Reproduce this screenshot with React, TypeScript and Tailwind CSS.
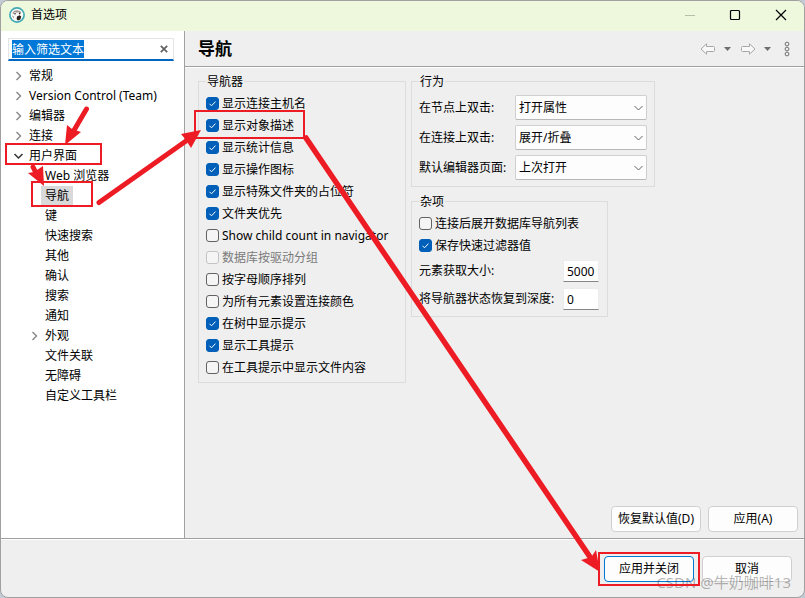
import { useEffect, useRef } from "react";

type TreeItem = {
    label: string;
    level: 1 | 2;
    arrow?: "closed" | "open";
    selected?: boolean;
};

const tree: TreeItem[] = [
    { label: "常规", level: 1, arrow: "closed" },
    { label: "Version Control (Team)", level: 1, arrow: "closed" },
    { label: "编辑器", level: 1, arrow: "closed" },
    { label: "连接", level: 1, arrow: "closed" },
    { label: "用户界面", level: 1, arrow: "open" },
    { label: "Web 浏览器", level: 2 },
    { label: "导航", level: 2, selected: true },
    { label: "键", level: 2 },
    { label: "快速搜索", level: 2 },
    { label: "其他", level: 2 },
    { label: "确认", level: 2 },
    { label: "搜索", level: 2 },
    { label: "通知", level: 2 },
    { label: "外观", level: 2, arrow: "closed" },
    { label: "文件关联", level: 2 },
    { label: "无障碍", level: 2 },
    { label: "自定义工具栏", level: 2 },
];

const navigatorOptions = [
    { label: "显示连接主机名", checked: true },
    { label: "显示对象描述", checked: true },
    { label: "显示统计信息", checked: true },
    { label: "显示操作图标", checked: true },
    { label: "显示特殊文件夹的占位符", checked: true },
    { label: "文件夹优先", checked: true },
    { label: "Show child count in navigator", checked: false },
    { label: "数据库按驱动分组", checked: false, disabled: true },
    { label: "按字母顺序排列", checked: false },
    { label: "为所有元素设置连接颜色", checked: false },
    { label: "在树中显示提示", checked: true },
    { label: "显示工具提示", checked: true },
    { label: "在工具提示中显示文件内容", checked: false },
];

const behaviors = [
    { id: "node", label: "在节点上双击:", value: "打开属性" },
    { id: "connection", label: "在连接上双击:", value: "展开/折叠" },
    { id: "editor", label: "默认编辑器页面:", value: "上次打开" },
];

const Logo = () => (
    <svg className="h-4 w-4" viewBox="0 0 16 16" aria-hidden="true">
        <circle cx="8" cy="8" r="7.1" fill="#fbf9f7" stroke="#3fa9b5" strokeWidth="1.7" />
        <path d="M3.400 6.600C4 4.400 5.600 3.200 7.800 3.200 10 3.200 11.800 4.200 12.400 6L11 6.400 9.600 5.200 7.400 5.800 5.600 5 4.600 7Z" fill="#a39b97" />
        <path d="M8 9.400 10.600 8.200 12.200 9.600 11.400 12.400 8.800 13.600 7.600 12Z" fill="#2b211f" />
        <path d="M3.200 8.600 4.600 9.600 4.800 11.600Z" fill="#655b58" />
        <circle cx="6" cy="6.800" r=".8" fill="#2b211f" />
        <circle cx="10.600" cy="6.600" r=".8" fill="#2b211f" />
    </svg>
);

const TitleBar = () => (
    <header className="flex h-[30px] items-center bg-[#eef8dc] pb-[2px] pl-2">
        <Logo />
        <span className="ml-[6px]">首选项</span>
        <div className="ml-auto flex h-full">
            <button aria-label="最小化" className="grid w-[45px] place-items-center text-[#b6bda9]">
                <svg className="h-3 w-3" viewBox="0 0 12 12"><path d="M1 6.500H11" stroke="currentColor" /></svg>
            </button>
            <button aria-label="最大化" className="grid w-[45px] place-items-center">
                <svg className="h-3 w-3" viewBox="0 0 12 12"><rect x="1.500" y="1.500" width="9" height="9" rx="1" fill="none" stroke="currentColor" strokeWidth="1.200" /></svg>
            </button>
            <button aria-label="关闭" className="grid w-[47px] place-items-center">
                <svg className="h-3 w-3" viewBox="0 0 12 12"><path d="M1 1 11 11M11 1 1 11" stroke="currentColor" strokeWidth="1.200" /></svg>
            </button>
        </div>
    </header>
);

const TreeRow = ({ item }: { item: TreeItem }) => (
    <li
        role="treeitem"
        aria-selected={!!item.selected}
        className={item.level === 1 ? "flex h-5 items-center pl-3" : "flex h-5 items-center pl-7"}
    >
        <span className="w-3 shrink-0">
            {item.arrow && (
                <svg className={item.arrow === "open" ? "h-3 w-3 text-[#333]" : "h-3 w-3 text-[#8c8c8c]"} viewBox="0 0 12 12">
                    <path
                        d={item.arrow === "open" ? "M1.500 4 5.500 8 9.500 4" : "M3.500 2 7.500 6 3.500 10"}
                        fill="none"
                        stroke="currentColor"
                        strokeWidth="1.500"
                    />
                </svg>
            )}
        </span>
        <span className={item.selected ? "bg-[#d9d9d9] px-1 leading-5" : "px-1 leading-5"}>{item.label}</span>
    </li>
);

const Sidebar = () => {
    const filter = useRef<HTMLInputElement>(null);

    useEffect(() => {
        filter.current?.focus();
        filter.current?.select();
    }, []);

    return (
        <aside className="w-[184px] shrink-0 border-r border-[#a0a0a0] bg-white pt-[7px]">
            <div className="mr-[10px] ml-[7px] flex h-[23px] items-center border border-b-2 border-[#e5e5e5] border-b-[#0067c0] pl-[3px]">
                <input
                    ref={filter}
                    aria-label="筛选"
                    defaultValue="输入筛选文本"
                    className="h-[18px] min-w-0 flex-1 outline-none selection:bg-[#0078d7] selection:text-white"
                />
                <button aria-label="清除" className="grid h-full w-[18px] place-items-center text-[#606060]">
                    <svg className="h-2 w-2" viewBox="0 0 8 8"><path d="M.8.8 7.200 7.200M7.200.8.8 7.200" stroke="currentColor" strokeWidth="1.700" /></svg>
                </button>
            </div>
            <ul role="tree" className="mt-[5px]">
                {tree.map((item) => <TreeRow key={item.label + item.level} item={item} />)}
            </ul>
        </aside>
    );
};

const ArrowIcon = ({ flip }: { flip?: boolean }) => (
    <svg className={flip ? "h-3 w-4 -scale-x-100" : "h-3 w-4"} viewBox="0 0 16 12">
        <path d="M1 6 6.500.8V3.500H13.500Q14.500 3.500 14.500 4.500V7.500Q14.500 8.500 13.500 8.500H6.500V11.200Z" fill="#f8f8f8" stroke="#a8a8a8" />
    </svg>
);

const Caret = () => (
    <svg className="h-1 w-[7px]" viewBox="0 0 7 4"><path d="M0 0H7L3.500 4Z" fill="#6e6e6e" /></svg>
);

const PageHeader = () => (
    <div className="flex h-9 items-center border-b border-[#a0a0a0] pr-[14px] pl-[13px]">
        <h1 className="pt-px text-[17px] leading-6 font-bold">导航</h1>
        <div className="ml-auto flex items-center">
            <button aria-label="后退"><ArrowIcon /></button>
            <button aria-label="后退历史" className="ml-2"><Caret /></button>
            <button aria-label="前进" className="ml-[9px]"><ArrowIcon flip /></button>
            <button aria-label="前进历史" className="ml-2"><Caret /></button>
            <button aria-label="菜单" className="ml-[13px]">
                <svg className="h-4 w-[6px]" viewBox="0 0 6 16" fill="none" stroke="#707070">
                    <circle cx="3" cy="3" r="1.900" />
                    <circle cx="3" cy="8" r="1.900" />
                    <circle cx="3" cy="13" r="1.900" />
                </svg>
            </button>
        </div>
    </div>
);

const CheckRow = ({ label, checked, disabled }: { label: string; checked: boolean; disabled?: boolean }) => (
    <label className={disabled ? "flex h-[22px] items-center text-[#7a7a7a]" : "flex h-[22px] items-center"}>
        <span className="relative mr-[3px] h-[13px] w-[13px] shrink-0">
            <input
                type="checkbox"
                defaultChecked={checked}
                disabled={disabled}
                className="peer block h-[13px] w-[13px] appearance-none rounded-[3px] border border-[#626262] bg-[#f5f5f5] checked:border-[#005fb8] checked:bg-[#005fb8] disabled:border-[#c3c3c3]"
            />
            <svg className="pointer-events-none absolute inset-0 hidden peer-checked:block" viewBox="0 0 13 13">
                <path d="M3.500 6.800 5.500 8.800 9.500 4.600" fill="none" stroke="#fff" strokeWidth="1" />
            </svg>
        </span>
        <span className="pt-[2px] whitespace-nowrap">{label}</span>
    </label>
);

const Legend = ({ children }: { children: string }) => (
    <legend className="px-px leading-4"><span className="block pt-px leading-[15px]">{children}</span></legend>
);

const NavigatorGroup = () => (
    <fieldset className="w-[208px] self-start border border-[#dcdcdc] px-[7px] pb-1">
        <Legend>导航器</Legend>
        <div className="pt-[3px]">
            {navigatorOptions.map((o) => <CheckRow key={o.label} {...o} />)}
        </div>
    </fieldset>
);

const BehaviorGroup = () => (
    <fieldset className="border border-[#dcdcdc] px-[7px] pb-[6px]">
        <Legend>行为</Legend>
        <div className="flex flex-col gap-[5px] pt-[6px]">
            {behaviors.map((b) => (
                <div key={b.id} className="flex h-[25px] items-center">
                    <label htmlFor={b.id} className="w-24">{b.label}</label>
                    <span className="relative">
                        <select id={b.id} className="block h-[25px] w-[132px] appearance-none rounded-[2px] border border-[#d0d0d0] border-b-[#b8b8b8] bg-[#fdfdfd] pl-[3px]">
                            <option>{b.value}</option>
                        </select>
                        <svg className="pointer-events-none absolute top-2 right-1 h-[9px] w-[9px]" viewBox="0 0 9 9">
                            <path d="M.5 3 4.500 7 8.500 3" fill="none" stroke="#606060" />
                        </svg>
                    </span>
                </div>
            ))}
        </div>
    </fieldset>
);

const NumberRow = ({ id, label, value }: { id: string; label: string; value: string }) => (
    <div className="flex h-[22px] items-center">
        <label htmlFor={id} className="w-[144px] whitespace-nowrap">{label}</label>
        <input id={id} defaultValue={value} className="h-[22px] w-9 border border-[#ececec] border-b-[#868686] bg-white pl-[3px]" />
    </div>
);

const MiscGroup = () => (
    <fieldset className="w-[197px] border border-[#dcdcdc] px-[7px] pb-[6px]">
        <Legend>杂项</Legend>
        <div className="pt-[3px]">
            <CheckRow label="连接后展开数据库导航列表" checked={false} />
            <CheckRow label="保存快速过滤器值" checked />
        </div>
        <div className="mt-1 flex flex-col gap-[6px]">
            <NumberRow id="fetch" label="元素获取大小:" value="5000" />
            <NumberRow id="depth" label="将导航器状态恢复到深度:" value="0" />
        </div>
    </fieldset>
);

const PushButton = ({ children, primary }: { children: string; primary?: boolean }) => (
    <button
        className={
            primary
                ? "h-[26px] w-[90px] rounded-[4px] border border-[#0078d4] bg-[#fdfdfd]"
                : "h-[26px] w-[90px] rounded-[4px] border border-[#d0d0d0] bg-[#fdfdfd]"
        }
    >
        {children}
    </button>
);

// Red boxes and arrows drawn over the dialog
const Annotations = () => (
    <svg className="pointer-events-none absolute top-0 left-0 h-[598px] w-[805px]" viewBox="0 0 805 598">
        <g fill="none" stroke="#ed1c24" strokeWidth="2">
            <rect x="6" y="144" width="95" height="20" />
            <rect x="32" y="182" width="60" height="24" />
            <rect x="195" y="111" width="109" height="27" />
            <rect x="599" y="553" width="100" height="32" />
        </g>
        <g fill="none" stroke="#ed1c24" strokeWidth="5" strokeLinecap="round">
            <path d="M86.500 109 73 132" />
            <path d="M33 167 37 175" />
            <path d="M99 202.500 186 141" />
            <path d="M306 138 590 557" strokeWidth="5.500" />
        </g>
        <g fill="#ed1c24">
            <path d="M65 145 67 125 72 129 81 132Z" />
            <path d="M44 186 28 173 34 172 43 166Z" />
            <path d="M201 130 181 134 186 140 191 148Z" />
            <path d="M600 572 581 560 588 558 592 556 596 550Z" />
        </g>
    </svg>
);

const App = () => {
    return (
        <div className="relative min-h-screen bg-[#c3ccd6] font-['Noto_Sans','Noto_Sans_CJK_SC',sans-serif] text-xs leading-4 text-black">
            <div className="flex min-h-screen flex-col overflow-hidden rounded-lg border border-[#a0a0a0] bg-[#efefef]">
                <TitleBar />
                <div className="flex flex-1">
                    <Sidebar />
                    <main className="flex min-w-0 flex-1 flex-col">
                        <PageHeader />
                        <div className="flex items-start gap-[5px] border-t border-white pt-[5px] pl-[13px]">
                            <NavigatorGroup />
                            <div className="flex w-[244px] flex-col gap-[6px]">
                                <BehaviorGroup />
                                <MiscGroup />
                            </div>
                        </div>
                        <div className="mt-auto flex justify-end gap-[7px] pr-[6px] pb-[6px]">
                            <PushButton>恢复默认值(D)</PushButton>
                            <PushButton>应用(A)</PushButton>
                        </div>
                    </main>
                </div>
                <footer className="border-t border-[#a0a0a0]">
                    <div className="flex justify-end gap-2 border-t border-white pt-4 pr-3 pb-[15px]">
                        <PushButton primary>应用并关闭</PushButton>
                        <PushButton>取消</PushButton>
                    </div>
                </footer>
            </div>
            <span className="absolute right-[14px] bottom-[6px] text-[15px] leading-5 text-black/30">CSDN @牛奶咖啡13</span>
            <Annotations />
        </div>
    );
};

export default App;
